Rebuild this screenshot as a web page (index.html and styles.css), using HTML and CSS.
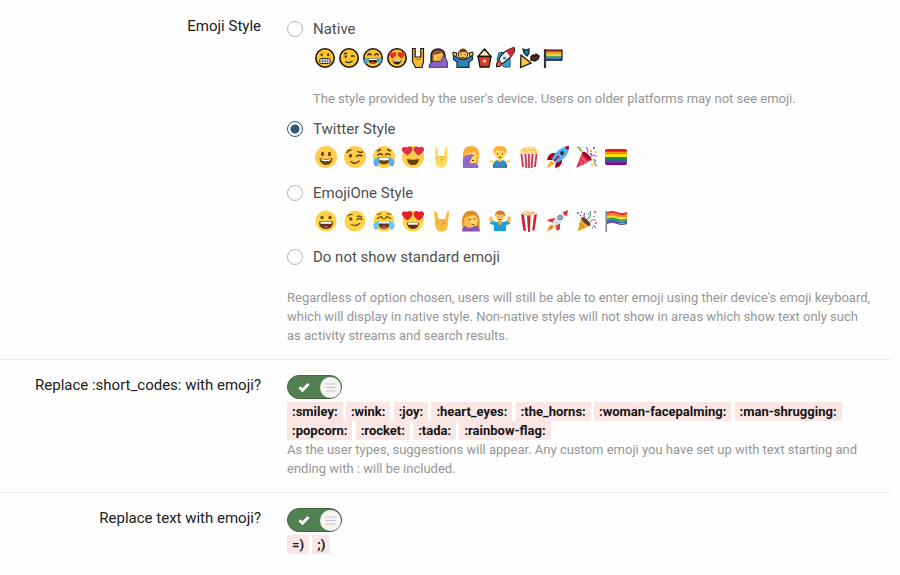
FILE: index.html
```
<!DOCTYPE html>
<html lang="en">
<head>
  <meta charset="UTF-8" />
  <meta name="viewport" content="width=device-width, initial-scale=1" />
  <title>Emoji options</title>
  <link rel="stylesheet" href="styles.css">
</head>
<body>
  <form class="options">
    <div class="row">
      <div class="row-label" id="styleLabel">Emoji Style</div>
      <div class="row-body">
        <ul class="choices" role="radiogroup" aria-labelledby="styleLabel">
          <li>
            <label class="choice"><input type="radio" name="emojiStyle" value="native" />Native</label>
            <div class="emoji native">
              <svg viewBox="0 0 24 24"><circle cx="12" cy="12" r="9.2" fill="#fdc32f" stroke="#1b1712" stroke-width="1.6"/><path d="M8.6 7.5v2.6M15.2 7.5v2.6" stroke="#3a2913" stroke-width="1.8"/><rect x="6.5" y="12.5" width="11" height="5" rx="2" fill="#fff" stroke="#3a2913"/><path d="M7 15h10M9.3 13v4M12 13v4M14.7 13v4" stroke="#555" stroke-width=".8"/></svg>
              <svg viewBox="0 0 24 24"><circle cx="12" cy="12" r="9.2" fill="#fdc32f" stroke="#1b1712" stroke-width="1.6"/><g fill="none" stroke="#3a2913" stroke-width="1.4"><path d="M7 8q1.5-1.5 3 0M14 10.5q1.5-1.5 3.5 0M8.5 15.5q3.5 2.5 7-.5"/></g><circle cx="8.8" cy="10.5" r="1.2" fill="#3a2913"/></svg>
              <svg viewBox="0 0 24 24"><circle cx="12" cy="12" r="9.2" fill="#fdc32f" stroke="#1b1712" stroke-width="1.6"/><path d="M6.5 9.5Q8.5 6 10.5 9.5M13.5 9.5Q15.5 6 17.5 9.5" fill="none" stroke="#3a2913" stroke-width="1.5"/><path d="M7 12h10q-.5 6-5 6t-5-6z" fill="#43250f"/><path d="M8 12.5h8V14H8z" fill="#fff"/><path d="M9.5 17q2.5-2 5 0-2.5 2-5 0z" fill="#e44"/><path d="M3 14q2-3 4.5-2 1 4-1.5 6-2 0-3-4zM21 14q-2-3-4.5-2-1 4 1.500 6 2 0 3-4z" fill="#55acd2"/></svg>
              <svg viewBox="0 0 24 24"><circle cx="12" cy="12" r="9.2" fill="#fdc32f" stroke="#1b1712" stroke-width="1.6"/><path id="nativeHeart" d="M7.6 12.5Q3.5 10 4 7.5 5.5 5 7.6 7 9.5 5 11.2 7.2 11.5 10 7.6 12.5z" fill="#e5302e"/><use href="#nativeHeart" x="8.8"/><path d="M7.5 14h9q-1 4.500-4.500 4.500T7.500 14z" fill="#43250f"/><path d="M8.5 14.2h7v1.300h-7z" fill="#fff"/></svg>
              <svg class="narrow" viewBox="0 0 18 24"><path d="M3.500 2.500h2.700V11h5.600V2.500h2.700V16q-1 2-1.500 5.500H6.500Q5 18 3.500 16z" fill="#f9bb36" stroke="#1b1712" stroke-width="1.200"/><path d="M6.500 13.500h5.300" fill="none" stroke="#b07320"/></svg>
              <svg viewBox="0 0 24 24"><g transform="translate(-1)"><path d="M5 14V9q1-6 7-6t7 6v7H5z" fill="#87543a" stroke="#1b1712" stroke-width="1.3"/><path d="M7.500 8.500q6 0 8-2 2 2 1.500 7-1.500 3.500-5 3.500t-4.500-3z" fill="#fac44d"/><path d="M3 21.300q0-5 5-6h7l2-5.300q5 2 4.500 11.300z" fill="#8763c5" stroke="#43355b"/><path d="M10 11l7-1-2 4.500-3-.5z" fill="#efa93e"/></g></svg>
              <svg viewBox="0 0 24 24"><path d="M6 21.3V16l-3.500-2.500V9l3 2 3 2h7l3-2 3-2v4.500L18 16v5.300z" fill="#2e82b9" stroke="#1b3448" stroke-width="1.3"/><path d="M2 9V6l4 1-1 4zM22 9V6l-4 1 1 4z" fill="#f7ba3b" stroke="#1b1712"/><circle cx="12" cy="8.5" r="4.700" fill="#fac44d" stroke="#1b1712"/><path d="M7.500 7q1-4.500 4.500-4.500T16.500 7q-4-2-9 0z" fill="#704223"/><path d="M10 8.200v1M14 8.200v1M10.500 11.500h3" stroke="#3a2913"/></svg>
              <svg class="narrow" viewBox="0 0 18 24"><path d="M3 10.500L9.500 3l6.500 7.500z" fill="#ffebad" stroke="#1b1712" stroke-width="1.4" stroke-linejoin="round"/><path d="M3 10.500h13l-2 10.500H5z" fill="#d93d27" stroke="#1b1712" stroke-width="1.3"/><circle cx="9.500" cy="15" r="1.800" fill="#f3c7a8"/></svg>
              <svg viewBox="0 0 24 24"><path d="M6 6.500h6l5 5V21h-6l-7-7z" fill="#2ea7d4" stroke="#175273"/><path d="M7 11Q12 4 21 1.500q2 4-4 10l-7 6-5-.5z" fill="#f2f2f3" stroke="#1b1712" stroke-width="1.2"/><path d="M13 5q4-3 8-3 1.500 4-3.500 9z" fill="#d42336"/><circle cx="11.500" cy="12" r="1.500" fill="#238ebf"/><path d="M5.500 14l4 4q-2 3-6 3-1-3 2-7z" fill="#ef4c35" stroke="#1b1712"/></svg>
              <svg viewBox="0 0 24 24"><path d="M4 9l10 8-10.500 4.500z" fill="#f8c747" stroke="#1b1712" stroke-width="1.3"/><path d="M6 3l3 1 3-1v4l-2 3-3-3z" fill="#1887a8" stroke="#102a38" stroke-width="1.3"/><path d="M14 11l2-2 2 1 1-2 3 2-1 3-3 2-4-1z" fill="#5b2c25" stroke="#231313" stroke-width="1.5"/></svg>
              <svg viewBox="0 0 24 24"><path d="M4 4h17v11H5z" fill="#e63b37"/><path d="M5 6h16v2H5z" fill="#f89b2d"/><path d="M5 8h16v2H5z" fill="#e6d34b"/><path d="M5 10h16v2H5z" fill="#4aa45c"/><path d="M5 12h16v3H5z" fill="#456aaf"/><path d="M4 4h17v10H5" fill="none" stroke="#1b1712" stroke-width="1.2"/><path d="M4 3v19" stroke="#333" stroke-width="2.2"/></svg>
            </div>
            <p class="hint">The style provided by the user's device. Users on older platforms may not see emoji.</p>
          </li>
          <li>
            <label class="choice"><input type="radio" name="emojiStyle" value="twitter" checked />Twitter Style</label>
            <div class="emoji">
              <svg viewBox="0 0 22 22"><circle cx="11" cy="11" r="11" fill="#ffcc4d"/><ellipse cx="7.5" cy="8" rx="1.5" ry="2.2" fill="#664500"/><ellipse cx="14.5" cy="8" rx="1.5" ry="2.2" fill="#664500"/><path d="M4.5 12q6.500 1.800 13 0-.5 7-6.500 7t-6.500-7z" fill="#664500"/><path d="M5.800 13q5.200 1.300 10.400 0-.5 2.200-5.200 2.200T5.800 13z" fill="#fff"/></svg>
              <svg viewBox="0 0 22 22"><circle cx="11" cy="11" r="11" fill="#ffcc4d"/><ellipse cx="6.5" cy="9.8" rx="1.6" ry="2" fill="#664500"/><g fill="none" stroke="#664500" stroke-width="1.5" stroke-linecap="round"><path d="M3 6.500q1-2.500 4-2.500M12.500 10.500q2.500-2.500 5.500-.5M14 5.500q2 1.500 4.500.5M7 15.500q4 3.500 8-.5"/></g></svg>
              <svg viewBox="0 0 22 22"><circle cx="11" cy="11" r="11" fill="#ffcc4d"/><g fill="none" stroke="#664500" stroke-width="1.5" stroke-linecap="round"><path d="M5 9q2.500-3 4.500 0M12.500 9q2-3 4.500 0M4.500 5l3-1.500M17.500 5l-3-1.500"/></g><path d="M5 11.500h12q0 7-6 7t-6-7z" fill="#664500"/><path d="M5.500 11.700h11v2q-5.500 1.500-11 0z" fill="#fff"/><path d="M.5 15q2-4 6-3.500.5 6-2 8.500-4 2-4-5zM21.500 15q-2-4-6-3.500-.5 6 2 8.500 4 2 4-5z" fill="#5dadec"/></svg>
              <svg viewBox="0 0 22 22"><circle cx="11" cy="11" r="11" fill="#ffcc4d"/><path d="M5 13q6 1.500 12 0-.5 6-6 6t-6-6z" fill="#664500"/><path id="twitterHeart" d="M5.500 9.500Q-.5 6-.2 2.800 1.200-.5 5 1.500 8.500-1 10.500 2.200 10.500 6 5.500 9.500z" fill="#dd2e44"/><use href="#twitterHeart" transform="matrix(-1 0 0 1 22 0)"/></svg>
              <svg viewBox="0 0 22 22"><path d="M4 1.500q2-1 2.500 1l.8 8h5.500l1.200-9q1.500-1.500 2.500.5l-.3 11.500q.3 8-6.200 8.300-4 0-5.500-5z" fill="#ffdc5d"/><path d="M5 14.500q-.5-4 2.500-4h5.500v3H9.500l2 3M10.500 10.500v3" fill="none" stroke="#edb64f"/></svg>
              <svg viewBox="0 0 22 22"><path d="M3 15V7q1-7 8-7t8 7l-1 12-15-1z" fill="#ffac33"/><path d="M5.500 8q6.500-1 8.500-3 3 2 2.500 7-1 6-5 6t-6-6z" fill="#ffdc5d"/><path d="M3 22v-3q-1-7 2-9 1.500-2 3-1l3-1q3 .5 1 3l-2.500 6 6 .5q3 .5 3 4.500z" fill="#9268ca"/><path d="M12.500 9.500h1.500M12 14.500h2" stroke="#664500"/></svg>
              <svg viewBox="0 0 22 22"><path d="M4 22q-.5-9 7-8 7.500-1 7 8z" fill="#3b88c3"/><path d="M0 14.500l4-.5v4M22 14.500l-4-.5v4" fill="#ffdc5d"/><path d="M9 11h4v4q-2 2-4 0z" fill="#f9ca55"/><circle cx="11" cy="7.500" r="5.700" fill="#ffdc5d"/><path d="M4.700 7Q3 0 11 0t6.300 7l-1.500 1q0-3-1.800-3.500-5 0-6.500-1Q6 5 6.200 8z" fill="#ffac33"/><path d="M8.500 7.200v1.500M13.500 7.200v1.500M9.500 11.500q1.500-1 3 0" stroke="#664500" fill="none"/><path d="M5 18v4M17 18v4" stroke="#28699c"/></svg>
              <svg viewBox="0 0 22 22"><path d="M2 8q-2-4 2-5 2-3 5-2 3-2 5 0 4-1 4.500 2 3 1 1.500 5z" fill="#ffe08a"/><path d="M4 5l2-2 2 3 3-3 2 2 3-2 2 4" fill="none" stroke="#eeb44c"/><path d="M2 8h18l-2 13q-7 2-14 0z" fill="#f4e8eb"/><path d="M3.500 8L5 21M7.500 8l.8 14M11 8v14M14.500 8l-.8 14M18.500 8L17 21" stroke="#c8324e" stroke-width="1.700"/></svg>
              <svg viewBox="0 0 22 22"><path d="M0 14q1-6 6-7h5l-5 7zM15 11v5q-1 5-7 6l1-7z" fill="#a0041e"/><path d="M5 13Q9 2 22 0q0 12-13 17z" fill="#55acee"/><path d="M18 .8q2-.8 4-.8 0 2-.8 4-2.200-1-3.200-3.200z" fill="#a0041e"/><circle cx="15" cy="7" r="1.900" fill="#292f33"/><path d="M4.500 14.500l3 3Q5 20 0 22q1-5 4.500-7.500z" fill="#ffac33"/><path d="M7 15l5-5" stroke="#a0041e" stroke-width="1.500"/></svg>
              <svg viewBox="0 0 22 22"><path d="M6.500 5.500Q12 8 15.500 14L0 22z" fill="#dd2e44"/><path d="M5 11l6 6M3.500 15l4 4" stroke="#ea596e" stroke-width="2"/><ellipse cx="11" cy="10" rx="2" ry="6" transform="rotate(-48 11 10)" fill="#a0041e"/><g fill="none" stroke-width="1.5"><path d="M1 2q4-2 3 2l2 1" stroke="#77b255"/><path d="M10 1q3 3 1 6" stroke="#aa8dd8"/><path d="M14 11q3-3 7-1" stroke="#aa8dd8"/><path d="M17 14q3-1 2 2t2 4" stroke="#77b255"/></g><g fill="#ffac33"><circle cx="15" cy="5" r="1.200"/><circle cx="20" cy="6" r="1"/><circle cx="16" cy="19" r="1"/></g><path d="M17 1h2v2h-2zM14 7h2v2h-2z" fill="#9266cc"/></svg>
              <svg viewBox="0 0 22 22"><clipPath id="flagShape"><rect y="3" width="22" height="16" rx="2"/></clipPath><g clip-path="url(#flagShape)"><path d="M0 3h22v3H0z" fill="#dd1e17"/><path d="M0 5.700h22v3H0z" fill="#ff8c00"/><path d="M0 8.300h22v3H0z" fill="#ffe600"/><path d="M0 11h22v3H0z" fill="#138f3e"/><path d="M0 13.700h22v3H0z" fill="#3558a0"/><path d="M0 16.300h22V19H0z" fill="#880082"/></g></svg>
            </div>
          </li>
          <li>
            <label class="choice"><input type="radio" name="emojiStyle" value="emojione" />EmojiOne Style</label>
            <div class="emoji">
              <svg viewBox="0 0 22 22"><circle cx="11" cy="11" r="10.5" fill="#ffd342"/><circle cx="7" cy="7.5" r="1.700" fill="#664e27"/><circle cx="15" cy="7.5" r="1.700" fill="#664e27"/><path d="M4 11.500h14q0 7.500-7 7.500t-7-7.500z" fill="#5a3522"/><path d="M5.500 12h11v1.800h-11z" fill="#fff"/><path d="M8 17q3-2 6 0-3 1.500-6 0z" fill="#ee4b60"/></svg>
              <svg viewBox="0 0 22 22"><circle cx="11" cy="11" r="10.5" fill="#ffd342"/><circle cx="6.800" cy="9" r="1.700" fill="#664e27"/><g fill="none" stroke="#664e27" stroke-width="1.400" stroke-linecap="round"><path d="M4 6q2-2 4-1.500M13 9.500q2.500-2 5 0M13.500 6.500q2-1 4 .5M7.500 14.500q4.500 2.500 8-1"/></g></svg>
              <svg viewBox="0 0 22 22"><circle cx="11" cy="11" r="10.5" fill="#ffd342"/><g fill="none" stroke="#664e27" stroke-width="1.300" stroke-linecap="round"><path d="M4.500 8.500l3.500-2 2 2M17.500 8.500l-3.500-2-2 2M4.500 4.500l3-1M17.500 4.500l-3-1"/></g><path d="M5 11h12q0 8-6 8t-6-8z" fill="#5a3522"/><path d="M6 11.200h10v2.300H6z" fill="#fff"/><path d="M8 17q3-2 6 0-3 2.500-6 0z" fill="#ee4b60"/><path d="M.5 14Q2 11 6 11q0 7-2 8.500-4 1-3.500-5.500zM21.500 14q-1.500-3-5.500-3 0 7 2 8.500 4 1 3.500-5.500z" fill="#65cbf2"/></svg>
              <svg viewBox="0 0 22 22"><circle cx="11" cy="11" r="10.5" fill="#ffd342"/><path d="M5 12.500h12q0 6.500-6 6.500t-6-6.500z" fill="#5a3522"/><path d="M6 12.700h10v2H6z" fill="#fff"/><path id="oneHeart" d="M5.500 10.500Q-.5 7 0 3.200 1.200 0 5 2 8.500-.5 10.500 3 10.500 7 5.500 10.500z" fill="#e81f2b"/><use href="#oneHeart" transform="matrix(-1 0 0 1 22 0)"/></svg>
              <svg viewBox="0 0 22 22"><path d="M3 2q2-2 3 1l1.500 6H14l2-7.500q2-1 2.200 1L17 12q0 9-5 9.500H8Q4 19 4 13z" fill="#fbbd3f"/><path d="M5.500 15q-.5-4 2.500-4.500h6v3h-4l1 3M11.500 10v3" fill="none" stroke="#e9a037"/></svg>
              <svg viewBox="0 0 22 22"><path d="M2.500 18Q0 1 11 .5 21 1 19.500 18z" fill="#df8d20"/><path d="M6 7q6-2 9-2 4 5 2 9-3 6-8 4-4-4-3-11z" fill="#ffd06b"/><path d="M6 6l4 4-3 8H4Q2 10 6 6z" fill="#efaf40"/><path d="M9 9.500h2M13.500 9h2M11.500 15q1.500-1 3 0" fill="none" stroke="#664e27"/><path d="M2 21.500q0-6 5-5.500l4 1.500 4-1.500q5 0 5 5.500z" fill="#8755ae"/><path d="M5 7l6 6 1 4-4 1-4-4z" fill="#fdbf4b"/></svg>
              <svg viewBox="0 0 22 22"><path d="M5 21v-6l-4-1V9q3 0 4 2.500l4 .5h4l4-.5Q18 9 21 9v5l-4 1v6z" fill="#1b9fd8"/><path d="M0 7q3-2 4 1l-1 5-2-1zM22 7q-3-2-4 1l1 5 2-1z" fill="#fdbf4b"/><path d="M9 10h4v4q-2 2-4 0z" fill="#f0a536"/><circle cx="11" cy="6.500" r="4.500" fill="#ffd06b"/><path d="M6 6q0-6 6-5.500 5 1 4 6-2 0-2-2-4 1-6-.5Q7 5 6 6z" fill="#d38327"/><path d="M9 7h1M12.500 7h1M9.500 9.500h3" stroke="#664e27"/></svg>
              <svg viewBox="0 0 22 22"><path d="M3 4q0-3 3-3 3-1.500 5 0 3-1 5 .5 3-.5 3 3l-1 3H4z" fill="#f4dfbd"/><path d="M3 5q8 2 16 0l-2.500 15q-5.500 2-11 0z" fill="#fff"/><path d="M3 4q1.500 1 3 1l2 16q-1.500 0-2.800-1zM9 5.500h3.500L12 22h-2zM16 5.200l3-1L16.500 20l-2.300 1z" fill="#c9252f"/><path d="M5 3l2 2 3-3 2 3 3-3 2 2" fill="none" stroke="#dca46e"/></svg>
              <svg viewBox="0 0 22 22"><path d="M0 11l2-2 6-1 5 6v5l-3 2-2-6-4-3z" fill="#d63b48"/><path d="M5 13Q10 4 19 1l1 1q-2 10-12 14z" fill="#d9e3e8"/><path d="M16 2l5-2-1 6-3-1z" fill="#dc2e3f"/><circle cx="13" cy="7.500" r="2.500" fill="#5d778b"/><circle cx="13" cy="7.500" r="1.300" fill="#a8d0e5"/><path d="M5 14l3 3-3 2-5 3 1-5z" fill="#f7b53c"/><path d="M5 16l-2 3" stroke="#e65b31" stroke-width="1.500"/></svg>
              <svg viewBox="0 0 22 22"><path d="M5 8l9 8-12.500 5.500z" fill="#f3ad32"/><ellipse cx="10" cy="11.500" rx="2.200" ry="6" transform="rotate(-47 10 11.500)" fill="#594025"/><path d="M4 13l4 5M3 17l2 2" stroke="#d78b24" stroke-width="1.500"/><g fill="none" stroke-width="1.200"><path d="M9 8q-2-3 0-5" stroke="#a656b4"/><path d="M11 9q5-3 3-8" stroke="#48b45c"/><path d="M14 12q2-3 6-2" stroke="#e95665"/><path d="M17 15l3 3" stroke="#3ab7df"/></g><path d="M1 2h2v2H1zM5 1h1v2H5zM17 6h2v1h-2zM12 3h1v2h-1z" fill="#47aae3"/><path d="M18 1l2 2M4 5l1 1M16 18h1M19 13h2" stroke="#e74858" stroke-width="1.500"/></svg>
              <svg viewBox="0 0 22 22"><path d="M2 2q5-2 10 0t10 0v3H2z" fill="#e63239"/><path d="M2 4q5-2 10 0t10 0v3H2z" fill="#f5852a"/><path d="M2 6.500q5-2 10 0t10 0v3H2z" fill="#f5dc35"/><path d="M2 8.500q5-2 10 0t10 0v3H2z" fill="#3ea54b"/><path d="M2 10.500q5-2 10 0t10 0V13H2z" fill="#3670b8"/><path d="M2 12.500q5-2 10 0t10 0V14q-5 2-10 0T2 14z" fill="#794897"/><path d="M1.200 1v21" stroke="#59656d" stroke-width="1.200"/></svg>
            </div>
          </li>
          <li>
            <label class="choice"><input type="radio" name="emojiStyle" value="none" />Do not show standard emoji</label>
          </li>
        </ul>
        <p class="hint explain">Regardless of option chosen, users will still be able to enter emoji using their device's emoji keyboard, which will display in native style. Non-native styles will not show in areas which show text only such as activity streams and search results.</p>
      </div>
    </div>

    <div class="row">
      <label class="row-label" for="shortCodes">Replace :short_codes: with emoji?</label>
      <div class="row-body">
        <div class="toggle">
          <input type="checkbox" id="shortCodes" checked />
          <svg class="tick" viewBox="0 0 12 10"><path d="M1.500 5.200l3 3L10.500 2"/></svg>
          <svg class="knob" viewBox="0 0 21 21"><circle cx="10.5" cy="10.5" r="10.5"/><path d="M5.500 7h10M5.500 10.500h10M5.500 14h10"/></svg>
        </div>
        <div class="codes">
          <code>:smiley:</code> <code>:wink:</code> <code>:joy:</code> <code>:heart_eyes:</code> <code>:the_horns:</code> <code>:woman-facepalming:</code> <code>:man-shrugging:</code> <code>:popcorn:</code> <code>:rocket:</code> <code>:tada:</code> <code>:rainbow-flag:</code>
        </div>
        <p class="hint">As the user types, suggestions will appear. Any custom emoji you have set up with text starting and ending with : will be included.</p>
      </div>
    </div>

    <div class="row">
      <label class="row-label" for="smilies">Replace text with emoji?</label>
      <div class="row-body">
        <div class="toggle">
          <input type="checkbox" id="smilies" checked />
          <svg class="tick" viewBox="0 0 12 10"><path d="M1.500 5.200l3 3L10.500 2"/></svg>
          <svg class="knob" viewBox="0 0 21 21"><circle cx="10.5" cy="10.5" r="10.5"/><path d="M5.500 7h10M5.500 10.500h10M5.500 14h10"/></svg>
        </div>
        <div class="codes"><code>=)</code> <code>;)</code></div>
      </div>
    </div>
  </form>
</body>
</html>
```
FILE: styles.css
```
body {
  font-family: Roboto, sans-serif;
  font-size: 15px;
  line-height: 20px;
  color: #505050;
  background: #fefefe;
  margin: 0;
}
.options {
  margin: 1px 8px 0 0;
}
.row {
  display: grid;
  grid-template-columns: 261px 1fr;
  column-gap: 26px;
  padding: 15px 18px 14px 0;
}
.row + .row {
  border-top: 1px solid #ededed;
}
.row-label {
  text-align: right;
  color: #202020;
}
.choices {
  display: grid;
  gap: 11px;
  list-style: none;
  margin: 0;
  padding: 3px 0 0;
}
.choices li {
  padding-left: 26px;
}
.choice {
  display: flex;
  align-items: center;
  gap: 10px;
  margin-left: -26px;
}
.choice input {
  appearance: none;
  box-sizing: border-box;
  width: 16px;
  height: 16px;
  margin: 0;
  border: 1px solid #b4b4b4;
  border-radius: 50%;
  background: #fff;
}
.choice input:checked {
  border-color: #2f577c;
  background: radial-gradient(circle, #2f577c 4px, #fff 5px);
}
.emoji {
  display: flex;
  gap: 7px;
  padding: 7px 2px 4px;
}
.emoji svg {
  width: 22px;
  height: 22px;
}
.native {
  gap: 0;
  padding-left: 0;
}
.native svg {
  width: 24px;
  height: 24px;
}
.native .narrow {
  width: 18px;
}
.hint {
  margin: 0;
  font-size: 13px;
  line-height: 19px;
  color: #969696;
}
.native + .hint {
  margin-top: 15px;
}
.explain {
  margin-top: 21px;
}
.toggle {
  position: relative;
  width: 55px;
  height: 24px;
}
.toggle input {
  appearance: none;
  display: block;
  box-sizing: border-box;
  width: 100%;
  height: 100%;
  margin: 0;
  border: 1px solid #42643f;
  border-radius: 12px;
  background: #528052;
  cursor: pointer;
}
.toggle svg {
  position: absolute;
  pointer-events: none;
}
.tick {
  top: 7px;
  left: 11px;
  width: 12px;
  height: 10px;
  fill: none;
  stroke: #fff;
  stroke-width: 3;
}
.knob {
  top: 2px;
  right: 1px;
  width: 21px;
  height: 21px;
  fill: #f6f4f5;
  stroke-width: 1;
}
.knob path {
  stroke: #cdbfc9;
}
.codes {
  padding-top: 3px;
  font-size: 13px;
  line-height: 19px;
}
.codes code {
  font-family: Roboto, sans-serif;
  font-weight: 700;
  color: #141414;
  background: #fae6e4;
  padding: 2px 5px;
  white-space: nowrap;
}
```
